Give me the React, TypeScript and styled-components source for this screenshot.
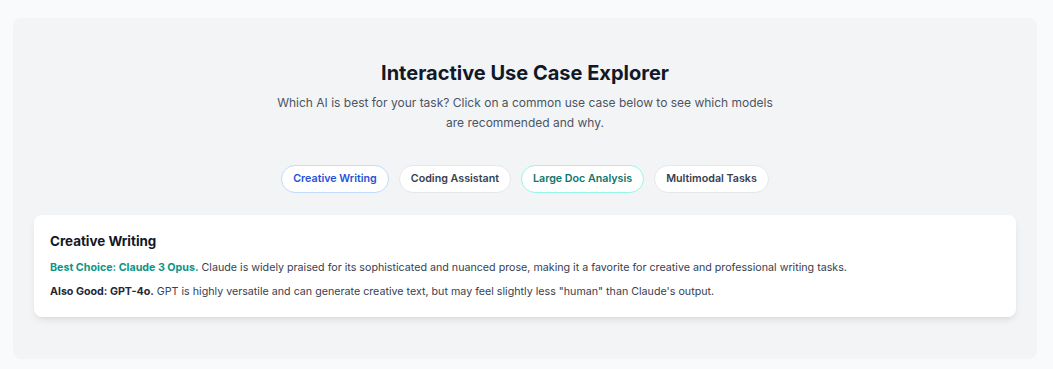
import React, { useState } from "react";
import styled, { createGlobalStyle } from "styled-components";

const GlobalStyle = createGlobalStyle`
  body {
    margin: 0;
    background: #f9fafb;
    font-family: "Inter", "Noto Sans", sans-serif;
  }
`;

const Page = styled.div`
  padding: 18px 0 10px 13px;
`;

const Section = styled.section`
  width: 1024px;
  background: #f3f4f6;
  border-radius: 8px;
  padding: 41px 21px 42px;
  box-sizing: border-box;
`;

const Title = styled.h2`
  margin: 0;
  text-align: center;
  font-size: 20px;
  line-height: 28px;
  font-weight: 700;
  color: #111827;
`;

const Subtitle = styled.p`
  margin: 6px auto 0;
  max-width: 512px;
  text-align: center;
  font-size: 12px;
  line-height: 20px;
  color: #4b5563;
`;

const Tabs = styled.div`
  display: flex;
  justify-content: center;
  gap: 10px;
  margin-top: 32px;
`;

type Tone = "blue" | "teal" | "none";

const tones: Record<Tone, { border: string; color: string }> = {
  blue: { border: "#bfdbfe", color: "#2552d6" },
  teal: { border: "#99f6e4", color: "#0f766e" },
  none: { border: "#e5e7eb", color: "#374151" },
};

const Tab = styled.button<{ $tone: Tone }>`
  height: 28px;
  padding: 0 11px 1px;
  border-radius: 999px;
  background: #ffffff;
  border: 1px solid ${(p) => tones[p.$tone].border};
  color: ${(p) => tones[p.$tone].color};
  font-family: inherit;
  font-size: 10.7px;
  font-weight: 600;
  cursor: pointer;
`;

const Card = styled.div`
  margin-top: 22px;
  background: #ffffff;
  border-radius: 8px;
  padding: 16px;
  box-shadow: 0 4px 8px -2px rgba(0, 0, 0, 0.1), 0 2px 4px -2px rgba(0, 0, 0, 0.06);
`;

const CardTitle = styled.h3`
  margin: 0;
  font-size: 13.4px;
  line-height: 20px;
  font-weight: 700;
  color: #111827;
`;

const Line = styled.p<{ $first?: boolean }>`
  margin: ${(p) => (p.$first ? "8px" : "6px")} 0 0;
  font-size: 10.7px;
  line-height: 18px;
  color: #374151;
`;

const Label = styled.strong<{ $accent?: boolean }>`
  font-weight: 700;
  color: ${(p) => (p.$accent ? "#0d9488" : "#1f2937")};
`;

const cases = [
  { name: "Creative Writing", tone: "blue" as Tone },
  { name: "Coding Assistant", tone: "none" as Tone },
  { name: "Large Doc Analysis", tone: "teal" as Tone },
  { name: "Multimodal Tasks", tone: "none" as Tone },
];

const App: React.FC = () => {
  const [active, setActive] = useState("Creative Writing");
  return (
    <>
      <GlobalStyle />
      <Page>
        <Section>
          <Title>Interactive Use Case Explorer</Title>
          <Subtitle>
            Which AI is best for your task? Click on a common use case below to see which models
            are recommended and why.
          </Subtitle>
          <Tabs>
            {cases.map((c) => (
              <Tab key={c.name} $tone={c.tone} onClick={() => setActive(c.name)}>
                {c.name}
              </Tab>
            ))}
          </Tabs>
          <Card>
            <CardTitle>{active}</CardTitle>
            <Line $first>
              <Label $accent>Best Choice: Claude 3 Opus.</Label> Claude is widely praised for its
              sophisticated and nuanced prose, making it a favorite for creative and professional
              writing tasks.
            </Line>
            <Line>
              <Label>Also Good: GPT-4o.</Label> GPT is highly versatile and can generate creative
              text, but may feel slightly less "human" than Claude's output.
            </Line>
          </Card>
        </Section>
      </Page>
    </>
  );
};

export default App;
